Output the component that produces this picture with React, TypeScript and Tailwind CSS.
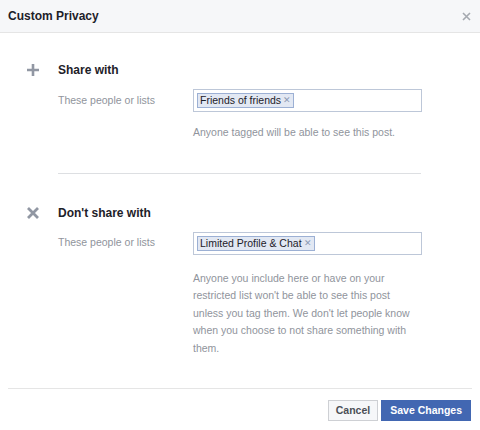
import React from "react";

function PlusIcon() {
  return (
    <svg width="14" height="14" viewBox="0 0 14 14" className="block">
      <path d="M7 1v12M1 7h12" stroke="#9197a3" strokeWidth="2.6" />
    </svg>
  );
}

function CrossIcon() {
  return (
    <svg width="14" height="14" viewBox="0 0 14 14" className="block">
      <path d="M2 2l10 10M12 2L2 12" stroke="#9197a3" strokeWidth="2.8" />
    </svg>
  );
}

function Token({ label }: { label: string }) {
  return (
    <span className="inline-flex h-[15px] items-center gap-[2px] border border-[#9cb0d4] bg-[#e2e8f3] pl-[2px] pr-[2px] text-[10.5px] leading-none text-[#1d2129]">
      {label}
      <span className="text-[9px] text-[#8d9ab3]">✕</span>
    </span>
  );
}

type SectionProps = {
  icon: React.ReactNode;
  title: string;
  token: string;
  note: string;
  noteTop: string;
};

function Section({ icon, title, token, note, noteTop }: SectionProps) {
  return (
    <div className="flex pl-[26px]">
      <div className="flex h-[16px] w-[14px] items-center justify-center">{icon}</div>
      <div className="ml-[18px] flex flex-col">
        <div className="h-[16px] text-[12px] font-bold leading-[16px] text-[#1d2129]">{title}</div>
        <div className="mt-[11px] flex items-center">
          <div className="w-[135px] text-[10.5px] text-[#90949c]">These people or lists</div>
          <div className="flex h-[23px] w-[229px] items-center border border-[#bdc7d8] bg-white pl-[3px]">
            <Token label={token} />
          </div>
        </div>
        <p className={`${noteTop} ml-[135px] w-[224px] text-[10.5px] leading-[17.5px] text-[#90949c]`}>{note}</p>
      </div>
    </div>
  );
}

export default function App() {
  return (
    <div className="flex h-[430px] w-[480px] flex-col bg-white font-['Liberation_Sans',Arial,sans-serif]">
      <header className="flex h-[33px] items-center justify-between border-b border-[#e5e5e5] bg-[#f6f7f9] pl-[8px] pr-[9px]">
        <span className="text-[12px] font-bold text-[#1d2129]">Custom Privacy</span>
        <svg width="9" height="9" viewBox="0 0 9 9">
          <path d="M1 1l7 7M8 1L1 8" stroke="#a5a9b0" strokeWidth="1.6" />
        </svg>
      </header>

      <main className="flex-1 pt-[29px]">
        <Section
          icon={<PlusIcon />}
          title="Share with"
          token="Friends of friends"
          note="Anyone tagged will be able to see this post."
          noteTop="mt-[12px]"
        />
        <div className="ml-[58px] mt-[31px] w-[363px] border-t border-[#dddfe2]" />
        <div className="mt-[31px]">
          <Section
            icon={<CrossIcon />}
            title="Don't share with"
            token="Limited Profile & Chat"
            note="Anyone you include here or have on your restricted list won't be able to see this post unless you tag them. We don't let people know when you choose to not share something with them."
            noteTop="mt-[15px]"
          />
        </div>
      </main>

      <footer className="mx-[8px] flex h-[42px] items-start justify-end gap-[3px] border-t border-[#e5e5e5] pr-px pt-[11px]">
        <button className="h-[21px] border border-[#ced0d4] bg-[#f6f7f9] px-[7px] text-[10.5px] font-bold text-[#4b4f56]">
          Cancel
        </button>
        <button className="h-[21px] border border-[#4267b2] bg-[#4267b2] px-[8px] text-[10.5px] font-bold text-white">
          Save Changes
        </button>
      </footer>
    </div>
  );
}
